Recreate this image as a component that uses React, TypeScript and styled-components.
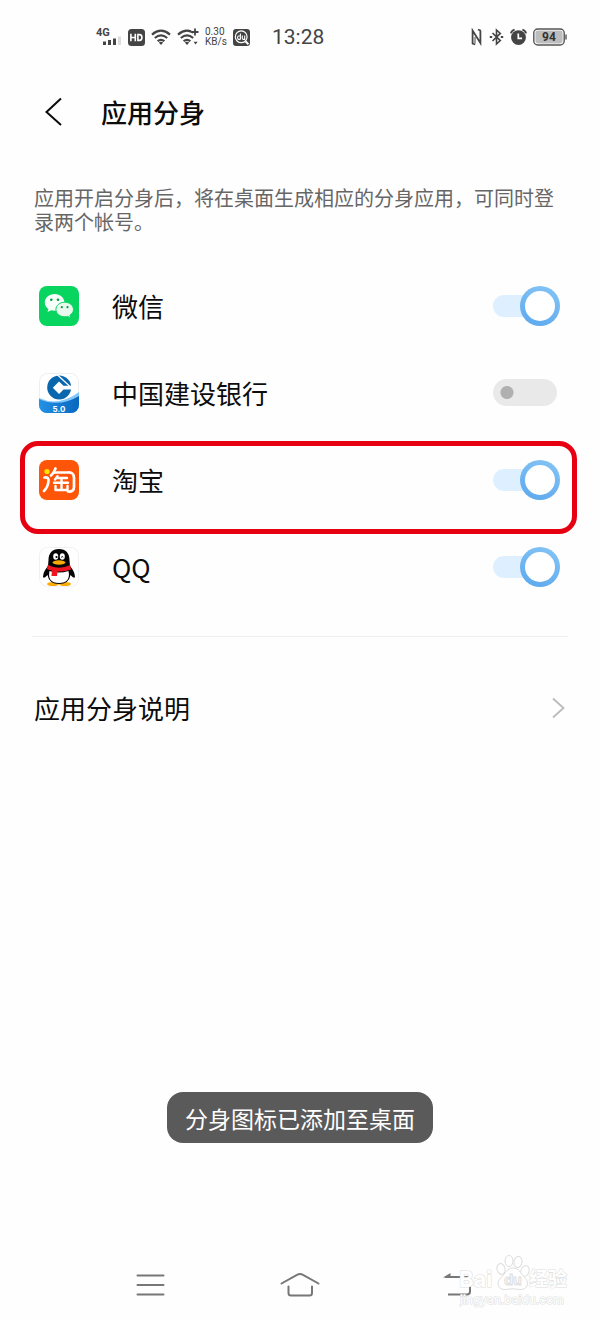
import React, { useState } from "react";
import styled, { createGlobalStyle } from "styled-components";

const GlobalStyle = createGlobalStyle`
  *, *::before, *::after { box-sizing: border-box; }
  body {
    margin: 0;
    background: #fefefe;
    color: #0c0c0c;
    font-family: "Noto Sans CJK SC", sans-serif;
  }
`;

const Screen = styled.div`
  position: relative;
  display: flex;
  flex-direction: column;
  min-height: 100vh;
`;

const StatusBar = styled.div`
  display: flex;
  align-items: center;
  justify-content: space-between;
  height: 74px;
  padding: 0 33px 0 96px;
  color: #444;
`;

const StatusGroup = styled.div`
  display: flex;
  align-items: center;
  gap: 6px;
  svg { display: block; }
`;

const Speed = styled.div`
  display: flex;
  flex-direction: column;
  width: 22px;
  font: 10px/10px Roboto, sans-serif;
  white-space: nowrap;
`;

const Clock = styled.time`
  margin-left: 16px;
  font: 21px/24px Roboto, sans-serif;
`;

const Header = styled.header`
  display: flex;
  align-items: center;
  gap: 28px;
  height: 76px;
  padding: 0 34px;
`;

const IconButton = styled.button`
  display: flex;
  align-items: center;
  justify-content: center;
  padding: 0;
  border: 0;
  background: none;
  color: inherit;
  svg { display: block; }
`;

const Title = styled.h1`
  margin: 0;
  font-size: 26px;
  line-height: 36px;
  font-weight: 500;
`;

const Description = styled.p`
  margin: 36px 34px 28px;
  color: #666;
  font-size: 20px;
  line-height: 24px;
`;

const AppList = styled.ul`
  margin: 0;
  padding: 0 34px;
  list-style: none;
`;

const AppRow = styled.li`
  position: relative;
  height: 87px;
`;

const RowLabel = styled.label`
  display: flex;
  align-items: center;
  height: 100%;
  padding: 0 6px 0 5px;
`;

const AppIcon = styled.span`
  display: flex;
  width: 40px;
  height: 40px;
  margin-right: 33px;
`;

const AppName = styled.span`
  flex: 1;
  font-size: 26px;
  line-height: 36px;
`;

const Highlight = styled.div`
  position: absolute;
  inset: 5px -11px -11px -14px;
  border: 5px solid #e60012;
  border-radius: 18px;
  pointer-events: none;
`;

const Switch = styled.input`
  appearance: none;
  display: flex;
  align-items: center;
  width: 67px;
  height: 40px;
  margin: 0;
  padding: 0 3px 0 0;

  &::before {
    content: "";
    flex: 1;
    height: 27px;
    border-radius: 14px;
    background: radial-gradient(circle at 14px 50%, #b0b0b0 6px, #e9e9e9 7px);
  }

  &:checked { padding: 0; }
  &:checked::before {
    height: 22px;
    margin-right: -20px;
    border-radius: 11px;
    background: #def0ff;
  }
  &:checked::after {
    content: "";
    width: 40px;
    height: 40px;
    border: 5px solid transparent;
    border-radius: 50%;
    background:
      linear-gradient(#fff, #fff) padding-box,
      linear-gradient(200deg, #86c5f5, #5ba8ed) border-box;
  }
`;

const Divider = styled.hr`
  width: calc(100% - 64px);
  height: 1px;
  margin: 26px 32px;
  border: 0;
  background: #eee;
`;

const MoreLink = styled.a`
  display: flex;
  align-items: center;
  justify-content: space-between;
  height: 90px;
  padding: 0 34px;
  color: inherit;
  font-size: 26px;
  line-height: 36px;
  text-decoration: none;
`;

const Toast = styled.div`
  position: absolute;
  left: 50%;
  bottom: 177px;
  transform: translateX(-50%);
  padding: 8px 18px 7px;
  border-radius: 16px;
  background: #5a5a5a;
  color: #fff;
  font-size: 23px;
  line-height: 36px;
  white-space: nowrap;
`;

const NavBar = styled.nav`
  display: flex;
  justify-content: center;
  height: 70px;
  margin-top: auto;
  padding: 0 12.5%;
  color: #777;
  button { flex: 1; }
`;

const Watermark = styled.div`
  position: absolute;
  right: 30px;
  bottom: 10px;
  pointer-events: none;
  svg { display: block; }
`;

const Wifi = ({ plus }: { plus?: boolean }) => (
  <svg width={plus ? 22 : 20} height="18" viewBox={plus ? "0 0 22 18" : "0 0 20 18"} fill="none" stroke="currentColor" strokeWidth="2.2">
    <path d="M1 6.6Q10-1.2 19 6.6" />
    <path d="M3.8 10Q10 4.8 16.2 10" />
    <path d="M6.6 13.2Q10 10.4 13.4 13.2" />
    <path d="M7.8 14.6Q10 13 12.2 14.6L10 17Z" fill="currentColor" stroke="none" />
    {plus && (
      <>
        <path d="M13.5 0h8v8h-5z" fill="#fefefe" stroke="none" />
        <path d="M14.5 4h7M18 .5v7" strokeWidth="1.8" />
        <path d="M16.6 13.8h4l-2 2.6z" fill="currentColor" stroke="none" />
      </>
    )}
  </svg>
);

const Signal = () => (
  <svg width="26" height="20" viewBox="0 0 26 20" fill="currentColor">
    <text x="0" y="9" fontFamily="Roboto, sans-serif" fontWeight="700" fontSize="11">4G</text>
    <path d="M7 14.5h3V18H7zM12 13h3v5h-3zM17 11.4h3V18h-3z" />
    <path d="M22 9.5h3V18h-3z" fill="#ddd" />
  </svg>
);

const HdBadge = () => (
  <svg width="17" height="17" viewBox="0 0 17 17">
    <rect width="17" height="17" rx="3.5" fill="#444" />
    <path d="M2.9 4.8v7.4M7.3 4.8v7.4M2.9 8.5h4.4M9.9 5.6h1.7q2.3 0 2.3 2.9t-2.3 2.9H9.9z" fill="none" stroke="#fff" strokeWidth="1.6" />
  </svg>
);

const SearchBadge = () => (
  <svg width="17" height="17" viewBox="0 0 17 17" fill="none" stroke="#fff">
    <rect width="17" height="17" rx="3" fill="#444" stroke="none" />
    <circle cx="8.2" cy="7.8" r="5.9" strokeWidth="1.2" />
    <path d="M12.4 12.2l3 3" strokeWidth="2" />
    <path d="M7.4 4.6v5.8M7.4 7H5.6q-1 0-1 1.7t1 1.7h1.8M9.3 6.6v2.6q0 1.2 1.1 1.2h1.3V6.6" strokeWidth="1.1" />
  </svg>
);

const Nfc = () => (
  <svg width="12" height="18" viewBox="0 0 12 18" fill="none" stroke="currentColor" strokeWidth="1.8">
    <path d="M1.6 16V2.6L9.4 15V3" />
    <path d="M1.2 15.4l3 1M7 1.6l3 1.200" strokeWidth="1.6" />
    <path d="M4 9v6.500" strokeWidth="1" />
  </svg>
);

const Bluetooth = () => (
  <svg width="15" height="18" viewBox="0 0 15 18" fill="none" stroke="currentColor" strokeWidth="1.6">
    <path d="M3.5 5l7.8 7.6L7.5 16V2l3.8 3.4L3.5 13" />
    <path d="M.8 9h2.4M11.8 9h2.4" strokeWidth="2" />
  </svg>
);

const Alarm = () => (
  <svg width="17" height="18" viewBox="0 0 17 18">
    <circle cx="8.5" cy="9.6" r="7.4" fill="#444" />
    <path d="M.9 5.4Q1.4 2.6 4.6 1.6M16.1 5.4Q15.6 2.6 12.4 1.6" fill="none" stroke="#444" strokeWidth="1.8" />
    <path d="M8.3 5.4v5h3.8" fill="none" stroke="#fff" strokeWidth="1.7" />
  </svg>
);

const Battery = () => (
  <svg width="34" height="18" viewBox="0 0 34 18">
    <rect x=".8" y="1" width="30.4" height="16" rx="4" fill="#fff" stroke="#555" strokeWidth="1.4" />
    <rect x="2.4" y="2.6" width="27.200" height="12.8" rx="2.4" fill="#bdbdbd" />
    <path d="M33 6.4v5.2" stroke="#555" strokeWidth="1.4" />
    <text x="16" y="13.4" textAnchor="middle" fontFamily="Roboto, sans-serif" fontWeight="700" fontSize="12" fill="#333">94</text>
  </svg>
);

const WeChatIcon = () => (
  <svg width="40" height="40" viewBox="0 0 40 40">
    <rect width="40" height="40" rx="8" fill="#08d55f" />
    <path d="M15.6 8C10 8 5.8 11.8 5.8 16.4c0 2.7 1.4 5 3.6 6.5l-.9 3.1 3.6-1.8c1.1.3 2.3.5 3.5.5 5.6 0 9.8-3.7 9.8-8.3S21.2 8 15.6 8z" fill="#f6fff9" />
    <path d="M25.7 16.2c-4.900 0-8.800 3.200-8.800 7.300s3.900 7.300 8.800 7.300c1.100 0 2.100-.1 3-.4l3 1.500-.8-2.700c2.100-1.300 3.600-3.400 3.600-5.700 0-4.100-3.900-7.300-8.800-7.300z" fill="#e9f9ee" stroke="#08d55f" strokeWidth="1" />
    <g fill="#079b45">
      <circle cx="12.3" cy="13.7" r="1.3" />
      <circle cx="19" cy="13.7" r="1.3" />
      <circle cx="22.8" cy="21.2" r="1.1" />
      <circle cx="28.5" cy="21.2" r="1.1" />
    </g>
  </svg>
);

const BankIcon = () => (
  <svg width="40" height="40" viewBox="0 0 40 40">
    <defs>
      <linearGradient id="bankWave" x1="0" x2="1">
        <stop offset="0" stopColor="#2492e4" />
        <stop offset="1" stopColor="#0866bf" />
      </linearGradient>
      <clipPath id="bankClip"><rect width="40" height="40" rx="8" /></clipPath>
    </defs>
    <rect x=".5" y=".5" width="39" height="39" rx="8" fill="#fff" stroke="#eee" />
    <g clipPath="url(#bankClip)">
      <path d="M0 25Q20 34 40 19V40H0z" fill="#83c8fa" />
      <path d="M0 26Q20 35 40 23V40H0z" fill="url(#bankWave)" />
    </g>
    <circle cx="20.200" cy="14.500" r="12" fill="#0b67ad" />
    <path d="M20 8.500L24.500 12.800H34V16.600H24.500L20 21L13.800 14.800Z" fill="#fff" />
    <path d="M17.500 1L31 13.500" stroke="#fff" strokeWidth="1.200" />
    <text x="20" y="39" textAnchor="middle" fontFamily="Inter, sans-serif" fontWeight="700" fontSize="8" fill="#fff">5.0</text>
  </svg>
);

const TaobaoIcon = () => (
  <svg width="40" height="40" viewBox="0 0 40 40">
    <rect width="40" height="40" rx="8" fill="#ff5508" />
    <circle cx="8" cy="11.5" r="2.6" fill="#ffe600" />
    <g fill="none" stroke="#fff" strokeWidth="2.7" strokeLinecap="round" strokeLinejoin="round">
      <path d="M5.500 17.500Q10 17 9.500 21Q9 27 5 31" />
      <path d="M16.500 8.500Q15 13 12 15.500" />
      <path d="M15.500 12.500H29Q35 12 35 18V27Q35 32 29 31.500" />
      <path d="M18.500 16.200L16 19.500M18 18H28M15 22.800H29M22.500 18.500V29.500M16.500 26V30H28.500V26" strokeWidth="2.4" />
    </g>
  </svg>
);

const QQIcon = () => (
  <svg width="40" height="40" viewBox="0 0 40 40">
    <rect x=".5" y=".5" width="39" height="39" rx="8" fill="#fff" stroke="#f1f1f1" />
    <ellipse cx="14" cy="37" rx="6" ry="2" fill="#faab07" />
    <ellipse cx="26" cy="37" rx="6" ry="2" fill="#faab07" />
    <path d="M20 2C13 2 9.500 6.500 9.500 13L9 19Q4 25 4 30Q5 32 8.500 28Q10 37 20 37T31.500 28Q35 32 36 30Q36 25 31 19L30.500 13C30.500 6.500 27 2 20 2z" fill="#050505" />
    <path d="M10.500 24Q20 27 29.500 24Q32 36 20 36T10.500 24z" fill="#fff" />
    <path d="M8.800 18Q20 23.500 31.200 18L32 22.500Q26 25 18.500 24.500L18 29H12.500L13 23.500Q10 23 8 22z" fill="#ee1520" />
    <ellipse cx="16.7" cy="9.5" rx="2.5" ry="3.3" fill="#fff" />
    <ellipse cx="23.3" cy="9.5" rx="2.5" ry="3.3" fill="#fff" />
    <circle cx="17.5" cy="10" r="1.1" />
    <path d="M22.2 10.4Q23.2 8.500 24.300 10.400" fill="none" stroke="#050505" />
    <ellipse cx="20" cy="15.5" rx="6.5" ry="2.2" fill="#faab07" />
  </svg>
);

const apps = [
  { name: "微信", Icon: WeChatIcon, on: true },
  { name: "中国建设银行", Icon: BankIcon, on: false },
  { name: "淘宝", Icon: TaobaoIcon, on: true, highlighted: true },
  { name: "QQ", Icon: QQIcon, on: true },
];

export default function App() {
  const [enabled, setEnabled] = useState(apps.map((a) => a.on));
  const toggle = (index: number) =>
    setEnabled((values) => values.map((v, i) => (i === index ? !v : v)));

  return (
    <>
      <GlobalStyle />
      <Screen>
        <StatusBar>
          <StatusGroup>
            <Signal />
            <HdBadge />
            <Wifi />
            <Wifi plus />
            <Speed>
              <span>0.30</span>
              <span>KB/s</span>
            </Speed>
            <SearchBadge />
            <Clock>13:28</Clock>
          </StatusGroup>
          <StatusGroup>
            <Nfc />
            <Bluetooth />
            <Alarm />
            <Battery />
          </StatusGroup>
        </StatusBar>

        <Header>
          <IconButton aria-label="返回">
            <svg width="39" height="40" viewBox="0 0 39 40" fill="none" stroke="currentColor" strokeWidth="2">
              <path d="M27 6.500L12.500 20L27 33" />
            </svg>
          </IconButton>
          <Title>应用分身</Title>
        </Header>

        <main>
          <Description>应用开启分身后，将在桌面生成相应的分身应用，可同时登录两个帐号。</Description>
          <AppList>
            {apps.map(({ name, Icon, highlighted }, i) => (
              <AppRow key={name}>
                <RowLabel>
                  <AppIcon><Icon /></AppIcon>
                  <AppName>{name}</AppName>
                  <Switch type="checkbox" role="switch" checked={enabled[i]} onChange={() => toggle(i)} />
                </RowLabel>
                {highlighted && <Highlight />}
              </AppRow>
            ))}
          </AppList>
          <Divider />
          <MoreLink href="#about">
            应用分身说明
            <svg width="14" height="24" viewBox="0 0 14 24" fill="none" stroke="#bbb" strokeWidth="1.8">
              <path d="M1 2.500L11.500 12L1 21.500" />
            </svg>
          </MoreLink>
        </main>

        <Toast role="status">分身图标已添加至桌面</Toast>

        <NavBar>
          <IconButton aria-label="最近任务">
            <svg width="30" height="30" viewBox="0 0 30 30" stroke="currentColor" strokeWidth="2" strokeLinecap="round">
              <path d="M2.500 5.500H28.500M2.500 15H28.500M2.500 24.500H28.500" />
            </svg>
          </IconButton>
          <IconButton aria-label="主屏幕">
            <svg width="40" height="30" viewBox="0 0 40 30" fill="none" stroke="currentColor" strokeWidth="2" strokeLinecap="round">
              <path d="M1.500 13.500L17 4.800Q20 3 23 4.800L38.500 13.500" />
              <path d="M8.500 16.500V23Q8.500 25.500 11 25.500H29.500Q32 25.500 32 23V16.500" />
            </svg>
          </IconButton>
          <IconButton aria-label="返回上一页">
            <svg width="44" height="30" viewBox="-14 0 44 30" fill="none" stroke="currentColor" strokeWidth="2">
              <path d="M3 7H25Q28 7 28 10V21.500Q28 24.500 25 24.500H6" />
              <path d="M1 7.500L8.500 3V7.500Z" fill="currentColor" stroke="none" />
            </svg>
          </IconButton>
        </NavBar>

        <Watermark>
          <svg width="112" height="56" viewBox="0 0 112 56" fill="#fff" stroke="#ddd" strokeWidth="1">
            <g fontFamily="Inter, 'Noto Sans CJK SC', sans-serif" fontWeight="700" paintOrder="stroke">
              <text x="1" y="33" fontSize="22">Bai</text>
              <text x="71" y="32" fontSize="19">经验</text>
              <text x="2" y="50" fontSize="12" fontWeight="400">jingyan.baidu.com</text>
            </g>
            <ellipse cx="43" cy="15" rx="4" ry="5.5" transform="rotate(-15 43 15)" />
            <ellipse cx="51" cy="7" rx="4" ry="5.5" />
            <ellipse cx="60" cy="8" rx="4" ry="5.5" transform="rotate(10 60 8)" />
            <ellipse cx="67" cy="17" rx="4" ry="5.5" transform="rotate(20 67 17)" />
            <path d="M55 14C49 14 47 20 43 23.500C37 29 41 36 47 35.500Q55 34 62 35.500C69 36 72 29 67 23.500C62 19 61 14 55 14z" />
            <text x="55" y="31" textAnchor="middle" fontFamily="Inter, sans-serif" fontWeight="700" fontSize="14">du</text>
          </svg>
        </Watermark>
      </Screen>
    </>
  );
}
